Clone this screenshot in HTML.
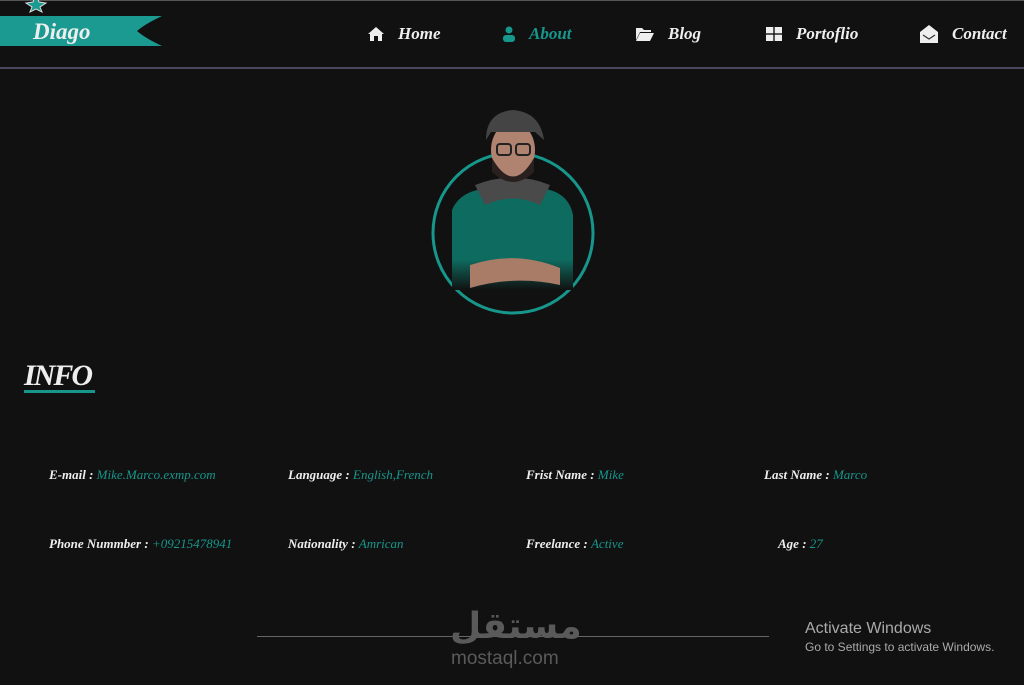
<!DOCTYPE html>
<html><head><meta charset="utf-8"><style>
body{margin:0;width:1024px;height:685px;background:#111;overflow:hidden;position:relative;font-family:"Liberation Serif",serif;font-style:italic;font-weight:bold;color:#eee}
.top{position:absolute;left:0;top:0;width:1024px;height:1px;background:#555}
.line{position:absolute;left:0;top:67px;width:1024px;height:2px;background:#4a4660}
.nav{position:absolute;top:24px;font-size:17px;display:flex;align-items:center;gap:14px}
.t{color:#17968c}
.info{position:absolute;left:24px;top:359px;font-size:30px;color:#eee;letter-spacing:-2px}
.ul{position:absolute;left:24px;top:390px;width:71px;height:3px;background:#17968c}
.f{position:absolute;font-size:13px;white-space:nowrap}
.f span{color:#17968c;font-weight:normal}
.foot{position:absolute;left:257px;top:636px;width:512px;height:1px;background:#666}
.aw{position:absolute;left:805px;top:620px;font-family:"Liberation Sans",sans-serif;font-style:normal;font-weight:normal;color:#aaa}
</style></head><body>
<div class="top"></div>
<svg style="position:absolute;left:0;top:0" width="170" height="50">
<polygon points="36,-6 39,2 46,3 40,7 42,12 36,9 30,12 32,7 26,3 33,2" fill="#1a9a90" stroke="#ddd" stroke-width="1"/>
<path d="M0 16 H162 Q145 24 137 31 Q145 38 162 46 H0 Z" fill="#1a9a90"/>
<text x="33" y="39" font-family="Liberation Serif" font-style="italic" font-weight="bold" font-size="23" fill="#eee">Diago</text>
</svg>
<div class="nav" style="left:368px"><svg width="16" height="14" viewBox="0 0 16 14"><path d="M8 0 L16 7 H14 V14 H10 V9 H6 V14 H2 V7 H0 Z" fill="#eee"/></svg>Home</div>
<div class="nav t" style="left:503px"><svg width="12" height="16" viewBox="0 0 12 16"><circle cx="6" cy="4" r="3.5" fill="#17968c"/><rect x="0" y="9" width="12" height="7" rx="3" fill="#17968c"/></svg>About</div>
<div class="nav" style="left:636px"><svg width="18" height="14" viewBox="0 0 18 14"><path d="M0 1 H6 L8 3 H15 V5 H4 L0 13 Z M4 6 H18 L14 14 H0 Z" fill="#eee"/></svg>Blog</div>
<div class="nav" style="left:766px"><svg width="16" height="14" viewBox="0 0 16 14"><rect x="0" y="0" width="7.3" height="6.3" fill="#eee"/><rect x="8.7" y="0" width="7.3" height="6.3" fill="#eee"/><rect x="0" y="7.7" width="7.3" height="6.3" fill="#eee"/><rect x="8.7" y="7.7" width="7.3" height="6.3" fill="#eee"/></svg>Portoflio</div>
<div class="nav" style="left:920px"><svg width="18" height="18" viewBox="0 0 18 18"><path d="M0 7 L9 0 L18 7 V18 H0 Z" fill="#eee"/><path d="M3 10 L9 14 L15 10" stroke="#333" stroke-width="1.2" fill="none"/></svg>Contact</div>
<div class="line"></div>
<svg style="position:absolute;left:420px;top:100px" width="190" height="220">
<defs><linearGradient id="g" x1="0" y1="0" x2="0" y2="1"><stop offset="0.7" stop-color="#0e6b5f"/><stop offset="1" stop-color="#111"/></linearGradient></defs>
<circle cx="93" cy="133" r="80" fill="none" stroke="#17968c" stroke-width="3"/>
<path d="M32 110 Q40 90 70 88 H118 Q148 90 153 115 V190 H32 Z" fill="url(#g)"/>
<path d="M50 165 Q95 150 140 168 V185 Q95 175 50 188 Z" fill="#a87c66"/>
<path d="M55 85 Q93 70 130 85 L120 105 Q93 92 65 105 Z" fill="#4a4a4a"/>
<ellipse cx="93" cy="50" rx="22" ry="28" fill="#b08270"/>
<path d="M72 58 Q93 95 114 58 V72 Q93 92 72 72 Z" fill="#2a2020"/>
<path d="M66 40 Q66 12 93 10 Q120 12 124 40 L115 32 H71 Z" fill="#444"/>
<rect x="77" y="44" width="14" height="11" rx="3" fill="none" stroke="#222" stroke-width="2"/>
<rect x="96" y="44" width="14" height="11" rx="3" fill="none" stroke="#222" stroke-width="2"/>
</svg>
<div class="info">INFO</div><div class="ul"></div>
<div class="f" style="left:49px;top:467px">E-mail : <span>Mike.Marco.exmp.com</span></div>
<div class="f" style="left:288px;top:467px">Language : <span>English,French</span></div>
<div class="f" style="left:526px;top:467px">Frist Name : <span>Mike</span></div>
<div class="f" style="left:764px;top:467px">Last Name : <span>Marco</span></div>
<div class="f" style="left:49px;top:536px">Phone Nummber : <span>+09215478941</span></div>
<div class="f" style="left:288px;top:536px">Nationality : <span>Amrican</span></div>
<div class="f" style="left:526px;top:536px">Freelance : <span>Active</span></div>
<div class="f" style="left:778px;top:536px">Age : <span>27</span></div>
<div class="foot"></div>
<div style="position:absolute;left:450px;top:606px;font-family:'DejaVu Sans',sans-serif;font-style:normal;font-size:36px;color:#5a5a5a;font-weight:bold">مستقل</div>
<div style="position:absolute;left:451px;top:648px;font-family:'Liberation Sans',sans-serif;font-style:normal;font-weight:normal;font-size:19px;color:#5a5a5a">mostaql.com</div>
<div class="aw" style="font-size:16px">Activate Windows</div>
<div class="aw" style="top:640px;font-size:12px">Go to Settings to activate Windows.</div>
</body></html>
